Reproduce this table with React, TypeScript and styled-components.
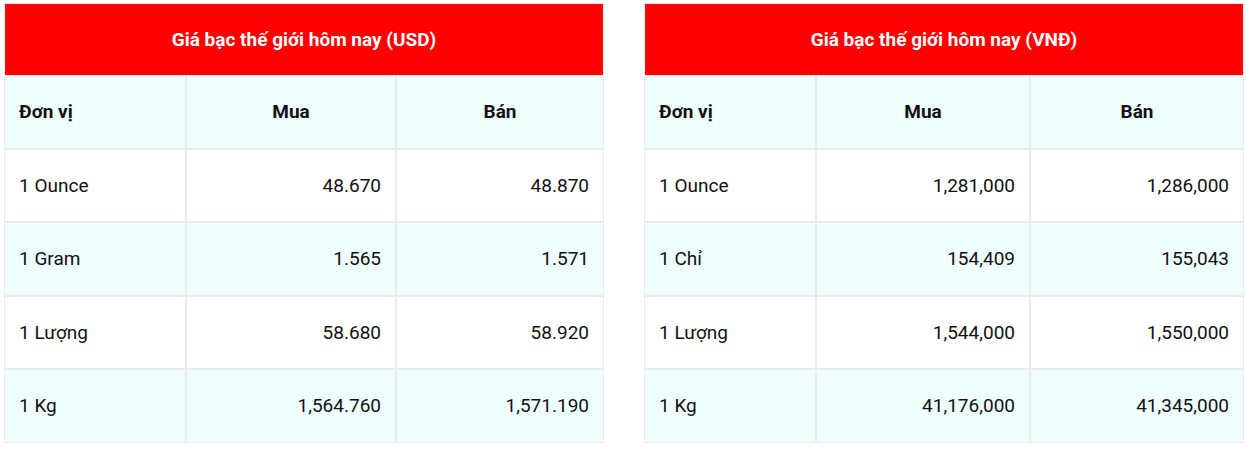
import React from 'react';
import styled, { createGlobalStyle } from 'styled-components';

const GlobalStyle = createGlobalStyle`
  html, body {
    margin: 0;
    padding: 0;
    background: #fff;
    font-family: Roboto, "Liberation Sans", sans-serif;
  }
`;

const Page = styled.div`
  display: grid;
  grid-template-columns: 600px 600px;
  gap: 40px;
  padding: 3px 0 0 4px;
`;

const Table = styled.table`
  width: 100%;
  border-collapse: separate;
  border-spacing: 0;
  table-layout: fixed;
  color: #111;
`;

const TitleCell = styled.th`
  background: #ff0000;
  color: #fff;
  font-size: 19px;
  font-weight: 700;
  text-align: center;
  height: 71px;
  border: 1px solid #ececec;
  border-bottom: none;
  padding: 0;
`;

const Row = styled.tr<{ $tinted: boolean }>`
  background: ${(p) => (p.$tinted ? '#effeff' : '#fff')};
`;

const HeadCell = styled.th<{ $align: 'left' | 'center' }>`
  height: 71.5px;
  padding: 0 14px;
  border: 1px solid #ececec;
  font-size: 19px;
  font-weight: 700;
  text-align: ${(p) => p.$align};
`;

const Cell = styled.td<{ $align: 'left' | 'right' }>`
  height: 71.5px;
  padding: 0 14px;
  border: 1px solid #ececec;
  font-size: 19px;
  font-weight: 400;
  text-align: ${(p) => p.$align};
`;

type PriceRow = { unit: string; buy: string; sell: string };

type PriceTableProps = {
  title: string;
  widths: [number, number, number];
  rows: PriceRow[];
};

const PriceTable: React.FC<PriceTableProps> = ({ title, widths, rows }) => (
  <Table>
    <colgroup>
      {widths.map((w, i) => (
        <col key={i} style={{ width: w }} />
      ))}
    </colgroup>
    <thead>
      <tr>
        <TitleCell colSpan={3}>{title}</TitleCell>
      </tr>
      <Row $tinted>
        <HeadCell $align="left">Đơn vị</HeadCell>
        <HeadCell $align="center">Mua</HeadCell>
        <HeadCell $align="center">Bán</HeadCell>
      </Row>
    </thead>
    <tbody>
      {rows.map((r, i) => (
        <Row key={r.unit} $tinted={i % 2 === 1}>
          <Cell $align="left">{r.unit}</Cell>
          <Cell $align="right">{r.buy}</Cell>
          <Cell $align="right">{r.sell}</Cell>
        </Row>
      ))}
    </tbody>
  </Table>
);

const usdRows: PriceRow[] = [
  { unit: '1 Ounce', buy: '48.670', sell: '48.870' },
  { unit: '1 Gram', buy: '1.565', sell: '1.571' },
  { unit: '1 Lượng', buy: '58.680', sell: '58.920' },
  { unit: '1 Kg', buy: '1,564.760', sell: '1,571.190' },
];

const vndRows: PriceRow[] = [
  { unit: '1 Ounce', buy: '1,281,000', sell: '1,286,000' },
  { unit: '1 Chỉ', buy: '154,409', sell: '155,043' },
  { unit: '1 Lượng', buy: '1,544,000', sell: '1,550,000' },
  { unit: '1 Kg', buy: '41,176,000', sell: '41,345,000' },
];

export default function App() {
  return (
    <>
      <GlobalStyle />
      <Page>
        <PriceTable title="Giá bạc thế giới hôm nay (USD)" widths={[182, 210, 208]} rows={usdRows} />
        <PriceTable title="Giá bạc thế giới hôm nay (VNĐ)" widths={[172, 214, 214]} rows={vndRows} />
      </Page>
    </>
  );
}
